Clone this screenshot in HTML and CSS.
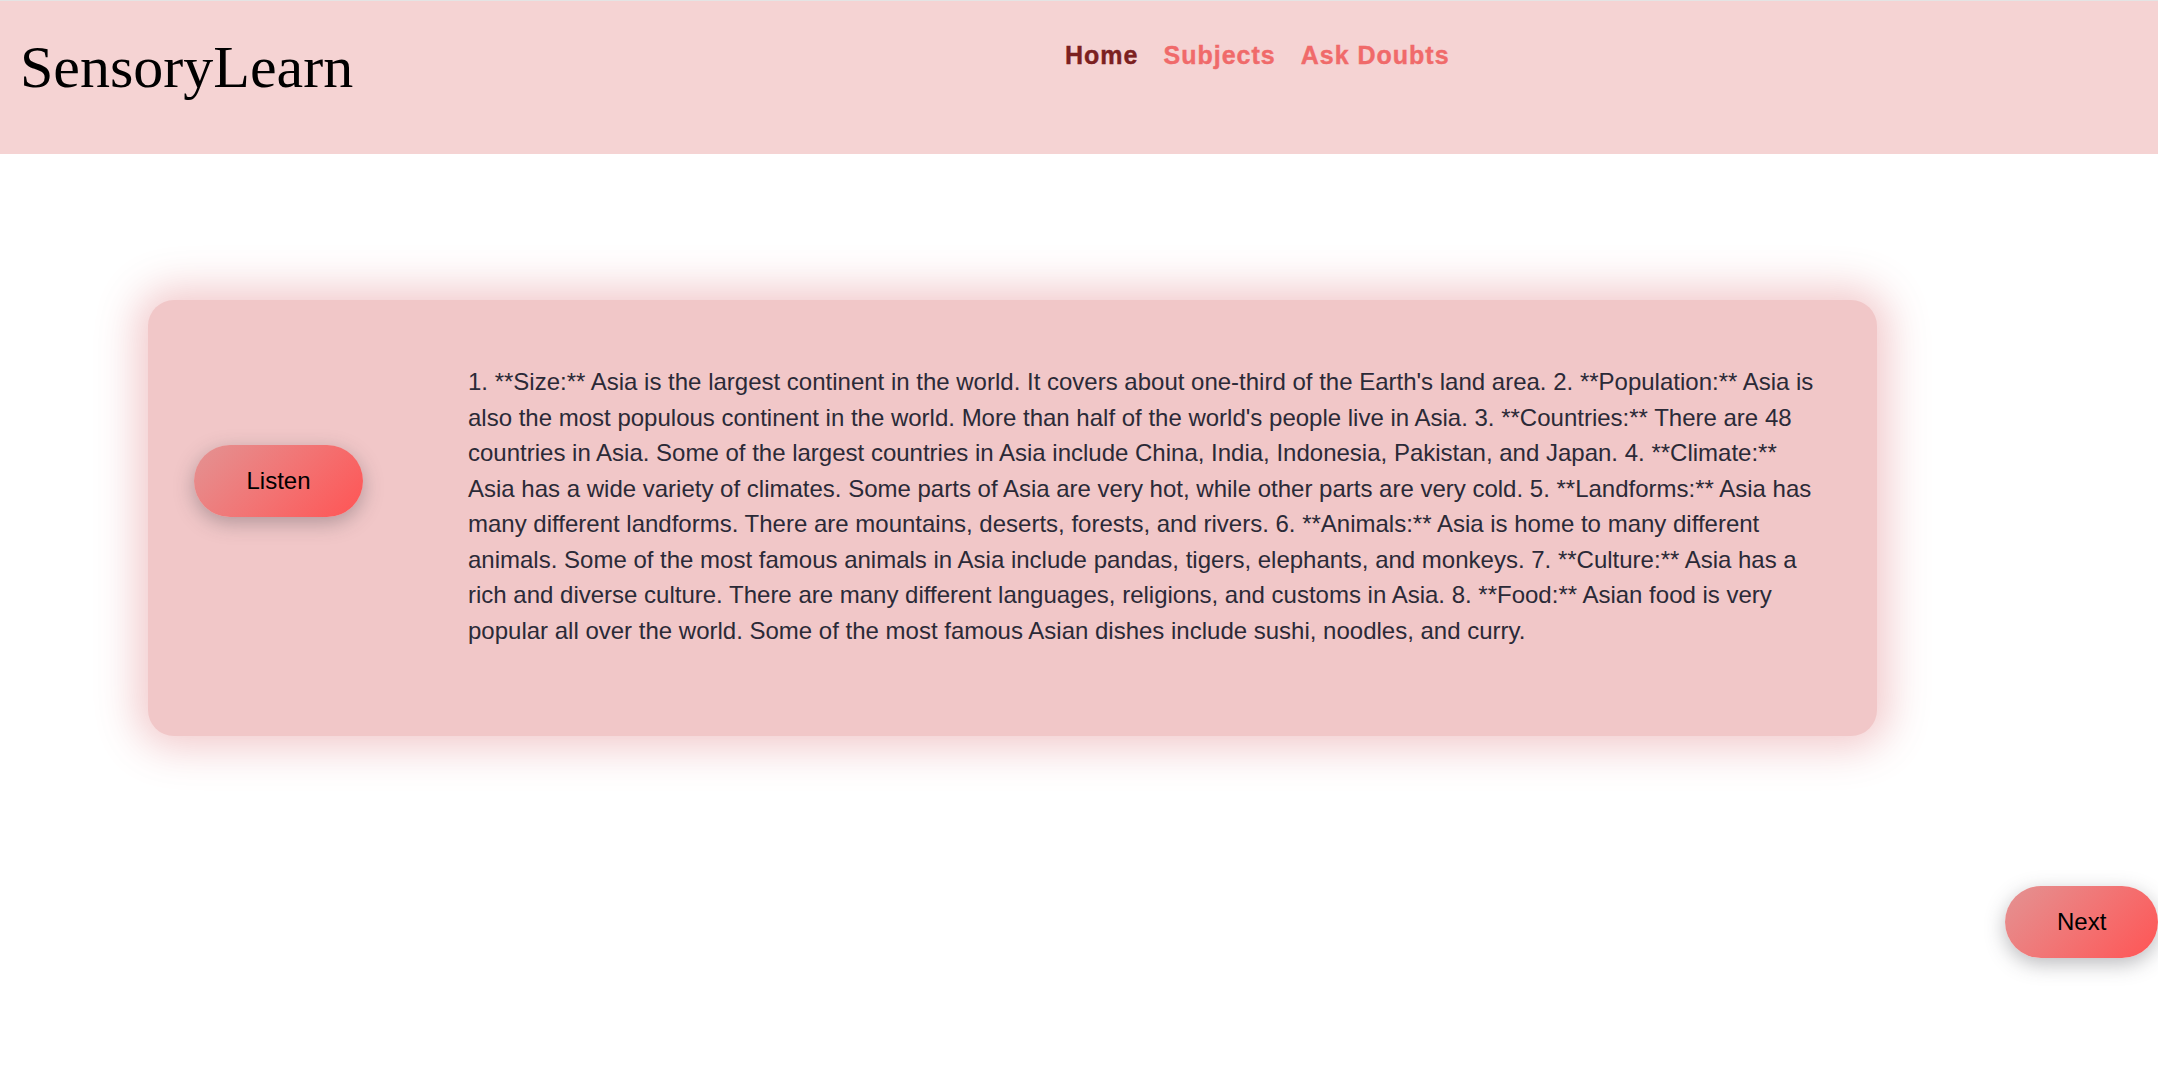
FILE: index.html
```html
<!DOCTYPE html>
<html lang="en">
<head>
<meta charset="utf-8">
<title>SensoryLearn</title>
<link rel="stylesheet" href="styles.css">
</head>
<body>
<header class="site-header">
  <div class="logo">SensoryLearn</div>
  <nav class="nav">
    <a class="nav-link active" href="#">Home</a>
    <a class="nav-link" href="#">Subjects</a>
    <a class="nav-link" href="#">Ask Doubts</a>
  </nav>
</header>
<main class="main">
  <section class="card">
    <div class="card-side">
      <button class="pill-btn listen-btn">Listen</button>
    </div>
    <p class="card-text">1. **Size:** Asia is the largest continent in the world. It covers about one-third of the Earth's land area. 2. **Population:** Asia is also the most populous continent in the world. More than half of the world's people live in Asia. 3. **Countries:** There are 48 countries in Asia. Some of the largest countries in Asia include China, India, Indonesia, Pakistan, and Japan. 4. **Climate:** Asia has a wide variety of climates. Some parts of Asia are very hot, while other parts are very cold. 5. **Landforms:** Asia has many different landforms. There are mountains, deserts, forests, and rivers. 6. **Animals:** Asia is home to many different animals. Some of the most famous animals in Asia include pandas, tigers, elephants, and monkeys. 7. **Culture:** Asia has a rich and diverse culture. There are many different languages, religions, and customs in Asia. 8. **Food:** Asian food is very popular all over the world. Some of the most famous Asian dishes include sushi, noodles, and curry.</p>
  </section>
  <div class="actions">
    <button class="pill-btn next-btn">Next</button>
  </div>
</main>
</body>
</html>
```
FILE: styles.css
```css
html, body {
  margin: 0;
  padding: 0;
  background: #ffffff;
}

body {
  font-family: "Liberation Sans", Arial, sans-serif;
}

.site-header {
  display: flex;
  align-items: flex-start;
  height: 153px;
  background: #f5d3d3;
  border-top: 1px solid #e4e4e4;
  padding-left: 20px;
  box-sizing: content-box;
}

.logo {
  flex: 0 0 1045px;
  font-family: "Liberation Serif", "Times New Roman", serif;
  font-size: 60px;
  line-height: 1;
  color: #000;
  padding-top: 36px;
}

.nav {
  display: flex;
  gap: 25px;
  padding-top: 40px;
}

.nav-link {
  font-family: "Liberation Sans", Arial, sans-serif;
  font-weight: bold;
  font-size: 25px;
  letter-spacing: 1px;
  line-height: 29px;
  color: #f06a6a;
  text-decoration: none;
  -webkit-text-stroke: 0.4px currentColor;
}

.nav-link.active {
  color: #7b2020;
}

.main {
  padding: 146px 0 60px 148px;
}

.card {
  display: flex;
  align-items: center;
  width: 1729px;
  box-sizing: border-box;
  padding: 64px 57px 88px 46px;
  gap: 105px;
  background: #f1c7c8;
  border-radius: 26px;
  box-shadow: 0 0 40px 12px rgba(241, 196, 198, 0.9);
}

.card-side {
  flex: 0 0 auto;
  display: flex;
  align-items: center;
}

.pill-btn {
  height: 72px;
  padding: 0 52px;
  border: none;
  border-radius: 36px;
  background: linear-gradient(135deg, #e39393 0%, #f27474 50%, #ff5454 100%);
  box-shadow: 0 6px 20px rgba(60, 60, 70, 0.35);
  font-family: "Liberation Sans", Arial, sans-serif;
  font-size: 24px;
  color: #000;
  cursor: pointer;
}

.listen-btn {
  margin-bottom: 50px;
  width: 169px;
}

.card-text {
  flex: 1 1 auto;
  margin: 0;
  font-size: 24px;
  line-height: 35.5px;
  color: #2b2a37;
}

.actions {
  display: flex;
  justify-content: flex-end;
  margin-top: 150px;
}

.next-btn {
  width: 153px;
}
```
